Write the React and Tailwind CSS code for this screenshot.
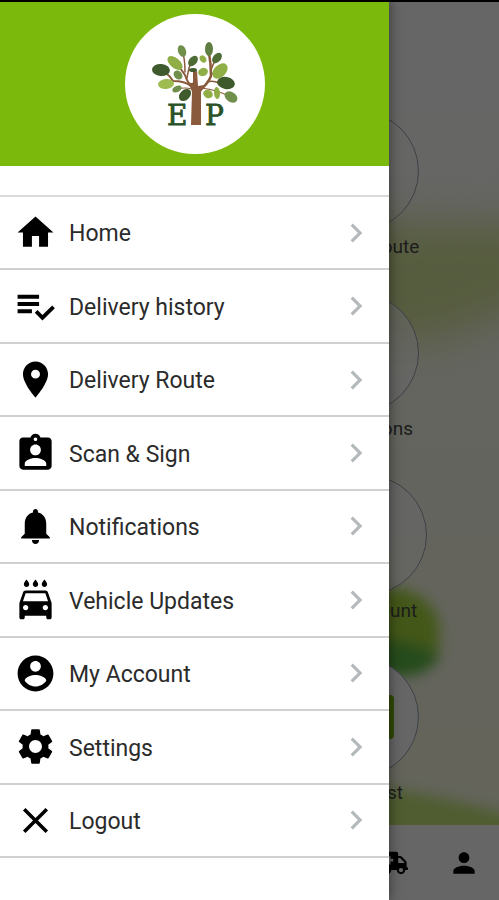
import {
  MdAssignmentInd,
  MdChevronRight,
  MdClose,
  MdLocalCarWash,
  MdLocationOn,
  MdPerson,
  MdSettings,
} from "react-icons/md";
import { FaAmbulance } from "react-icons/fa";

// ==========================
// Icons
// ==========================
function HomeIcon({ className }) {
  return (
    <svg viewBox="0 0 24 24" fill="currentColor" className={className}>
      <path d="M10 20v-6h4v6h5v-8h3L12 3 2 12h3v8z" />
    </svg>
  );
}

function HistoryIcon({ className }) {
  return (
    <svg viewBox="0 0 24 24" fill="currentColor" className={className}>
      <path d="M14 9.5H2v2.2h12zM14 5.5H2v2.2h12zM2 15.7h8v-2.2H2zM21.3 11.5L22.8 13l-6.9 6.8-4.3-4.3 1.5-1.5 2.8 2.8z" />
    </svg>
  );
}

function BellIcon({ className }) {
  return (
    <svg viewBox="0 0 24 24" fill="currentColor" className={className}>
      <path d="M12 21.8c1.1 0 2-.8 2-2.2h-4c0 1.4.9 2.2 2 2.2zM18 16v-5.5c0-3.4-1.9-5.7-4.6-6.3v-.5C13.4 2.9 12.8 2.3 12 2.3s-1.4.6-1.4 1.4v.5C7.9 4.8 6 7.1 6 10.5V16l-2 2v.7h16V18z" />
    </svg>
  );
}

function AccountIcon({ className }) {
  return (
    <svg viewBox="0 0 24 24" fill="currentColor" className={className}>
      <path d="M12 2C6.48 2 2 6.48 2 12s4.48 10 10 10 10-4.48 10-10S17.52 2 12 2zm0 3c1.66 0 3 1.34 3 3s-1.34 3-3 3-3-1.34-3-3 1.34-3 3-3zm0 14.2c-2.5 0-4.71-1.28-6-3.22.03-1.99 4-3.08 6-3.08 1.99 0 5.97 1.09 6 3.08-1.29 1.94-3.5 3.22-6 3.22z" />
    </svg>
  );
}

// cx, cy, rx, ry, rotation, colour
const leaves = [
  [72, 51, 4, 6, -20, "#6f8f4a"],
  [99, 49, 4, 7, 0, "#5f7f42"],
  [65, 63, 5, 9, -50, "#8fae45"],
  [83, 61, 4, 6, 40, "#4d6b35"],
  [93, 59, 3, 4, -35, "#8fae45"],
  [107, 58, 4, 6, 40, "#4d6b35"],
  [51, 70, 9, 6, 5, "#3f5a2c"],
  [110, 71, 6, 9, 45, "#8fae45"],
  [93, 72, 5, 4, -20, "#8fae45"],
  [68, 75, 4, 5, -40, "#6f8f4a"],
  [83, 70, 4, 2, 0, "#3f5a2c"],
  [56, 84, 8, 5, -5, "#9dbb4f"],
  [67, 89, 5, 3, -25, "#6f8f4a"],
  [116, 83, 9, 6, 10, "#3f5a2c"],
  [75, 95, 5, 7, 45, "#3f5a2c"],
  [98, 94, 5, 4, 25, "#8fae45"],
  [107, 93, 3, 6, -5, "#8fae45"],
  [121, 97, 7, 5, 35, "#6f8f4a"],
];

function Logo() {
  return (
    <svg viewBox="0 0 170 166" className="w-[170px] shrink-0" role="img" aria-label="ETP">
      <circle cx="85" cy="84" r="70" fill="#fff" />
      <g fill="none" stroke="#8a5a3c" strokeLinecap="round">
        <path d="M84 90 Q78 84 75 75 Q70 68 66 62" strokeWidth="2" />
        <path d="M81 86 Q75 81 63 81 Q60 76 56 73" strokeWidth="2" />
        <path d="M77 78 Q79 66 81 63 M75 72 Q75 60 73 54" strokeWidth="1.5" />
        <path d="M88 92 Q98 84 101 76 Q101 64 99 53" strokeWidth="2.5" />
        <path d="M97 82 Q103 80 109 83 M101 75 Q105 72 108 68 M101 70 Q103 64 106 59" strokeWidth="1.5" />
        <path d="M91 88 Q108 90 118 96 M82 89 Q74 87 68 89" strokeWidth="1.2" />
      </g>
      <path d="M83 72 L87 71 L88 86 L94 85 L91 92 L91 125 L81 125 L82 92 Q81 88 78 82 Q83 84 83 82 Z" fill="#8a5a3c" />
      {leaves.map(([cx, cy, rx, ry, turn, color]) => (
        <ellipse key={`${cx}-${cy}`} cx={cx} cy={cy} rx={rx} ry={ry} fill={color} transform={`rotate(${turn} ${cx} ${cy})`} />
      ))}
      <g fill="#2a5226" stroke="#2a5226" strokeWidth="0.8" fontSize="28" fontFamily="'DejaVu Serif', serif">
        <text x="57" y="125">E</text>
        <text x="95" y="125">P</text>
      </g>
    </svg>
  );
}

// ==========================
// Data
// ==========================
const menuItems = [
  { label: "Home", Icon: HomeIcon },
  { label: "Delivery history", Icon: HistoryIcon },
  { label: "Delivery Route", Icon: MdLocationOn },
  { label: "Scan & Sign", Icon: MdAssignmentInd },
  { label: "Notifications", Icon: BellIcon },
  { label: "Vehicle Updates", Icon: MdLocalCarWash },
  { label: "My Account", Icon: AccountIcon },
  { label: "Settings", Icon: MdSettings },
  { label: "Logout", Icon: MdClose },
];

const tiles = [
  { label: "Delivery Route", tile: "mr-20", circle: "bg-white/20" },
  { label: "Notifications", tile: "mr-20", circle: "bg-white/60" },
  { label: "My Account", tile: "mr-18", circle: "bg-white/60" },
  { label: "Check List", tile: "mr-20", circle: "bg-white", badge: true },
];

// ==========================
// Home screen behind the drawer
// ==========================
function Backdrop() {
  return (
    <svg viewBox="0 0 499 900" preserveAspectRatio="none" className="absolute inset-0 size-full" aria-hidden="true">
      <defs>
        <linearGradient id="sky" x1="0" y1="0" x2="0" y2="1">
          <stop offset="0.1" stopColor="#ffffff" />
          <stop offset="0.4" stopColor="#fbfcee" />
          <stop offset="1" stopColor="#f8f9e0" />
        </linearGradient>
        <filter id="soft" x="-50%" y="-50%" width="200%" height="200%">
          <feGaussianBlur stdDeviation="20" />
        </filter>
        <filter id="leaf" x="-50%" y="-50%" width="200%" height="200%">
          <feGaussianBlur stdDeviation="7" />
        </filter>
      </defs>
      <rect width="499" height="900" fill="url(#sky)" />
      <path d="M340 220 L540 225 L540 300 L440 340 L340 345 Z" fill="#d8e79c" filter="url(#soft)" />
      <path d="M370 590 Q420 580 438 618 Q444 650 430 660 L370 670 Z" fill="#a9da3c" filter="url(#leaf)" />
      <path d="M370 640 Q410 640 440 655 Q425 678 400 676 L370 670 Z" fill="#5dbb46" filter="url(#leaf)" />
      <path d="M360 785 Q430 792 520 818 L520 850 L360 850 Z" fill="#c5e878" filter="url(#leaf)" />
    </svg>
  );
}

function HomeScreen() {
  return (
    <div className="relative flex min-h-screen flex-col bg-white">
      <Backdrop />

      <main className="relative flex flex-1 flex-col items-end gap-[34px] pt-[111px]">
        {tiles.map(({ label, tile, circle, badge }) => (
          <div key={label} className={`flex w-[120px] flex-col items-center gap-1 ${tile}`}>
            <div className={`flex size-[120px] items-center justify-center rounded-full border border-gray-400 ${circle}`}>
              {badge && <span className="h-11 w-[70px] rounded bg-[#7cbb10]" />}
            </div>
            <span className="text-[19px] leading-6 whitespace-nowrap text-[#4a4a4a]">{label}</span>
          </div>
        ))}
      </main>

      <footer className="relative flex h-[75px] items-center justify-end gap-10 bg-white pr-[19px]">
        <FaAmbulance className="size-7 text-black" />
        <MdPerson className="size-8 text-black" />
      </footer>
    </div>
  );
}

// ==========================
// Drawer
// ==========================
function Drawer() {
  return (
    <aside className="absolute inset-y-0 left-0 flex w-[78%] flex-col bg-white shadow-[0_0_12px_rgba(0,0,0,0.5)]">
      <div className="flex h-[166px] items-center justify-center bg-[#7cb90d]">
        <Logo />
      </div>

      <nav className="mt-[29px] mb-[42px] flex flex-1 flex-col border-t-2 border-[#d9d9d9]">
        {menuItems.map(({ label, Icon }) => (
          <a
            key={label}
            href="#"
            className="flex flex-1 items-center gap-3 border-b-2 border-[#d0d0d0] pr-[14px] pl-[14px] text-[23px] text-[#2b2b2b]"
          >
            <Icon className="size-[43px] shrink-0 text-black" />
            <span className="flex-1 pt-1">{label}</span>
            <MdChevronRight className="size-[38px] shrink-0 text-[#b4b9bc]" />
          </a>
        ))}
      </nav>
    </aside>
  );
}

export default function App() {
  return (
    <div className="relative min-h-screen overflow-hidden font-['Roboto',sans-serif]">
      <HomeScreen />
      <div className="absolute inset-0 bg-black/60" />
      <Drawer />
      {/* status bar edge */}
      <div className="absolute inset-x-0 top-0 h-0.5 bg-black" />
    </div>
  );
}
